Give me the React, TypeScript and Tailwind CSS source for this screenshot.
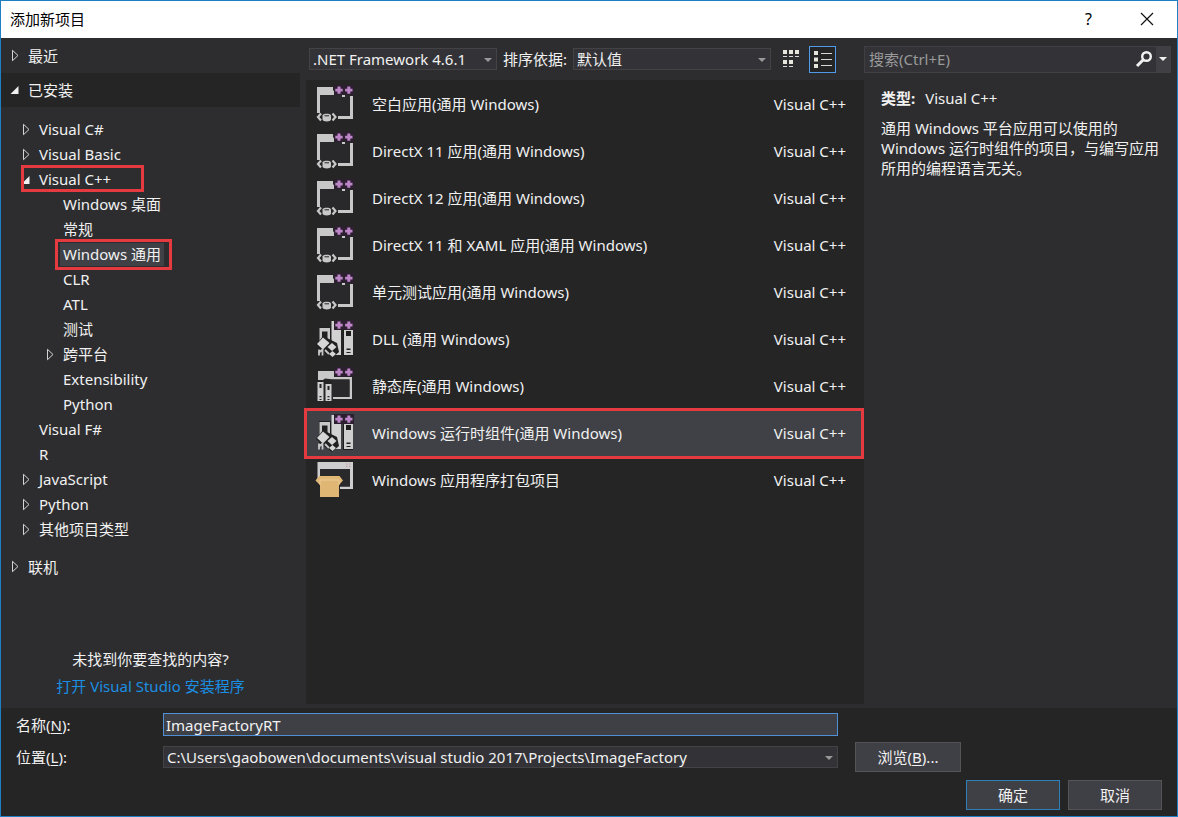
import { useState } from "react";
import type { ReactNode } from "react";

type TreeNode = {
  label: string;
  level: 1 | 2;
  glyph?: "open" | "closed";
  mark?: "branch" | "leaf";
};

type IconKind = "app" | "component" | "library" | "package";

const TREE: TreeNode[] = [
  { label: "Visual C#", level: 1, glyph: "closed" },
  { label: "Visual Basic", level: 1, glyph: "closed" },
  { label: "Visual C++", level: 1, glyph: "open", mark: "branch" },
  { label: "Windows 桌面", level: 2 },
  { label: "常规", level: 2 },
  { label: "Windows 通用", level: 2, mark: "leaf" },
  { label: "CLR", level: 2 },
  { label: "ATL", level: 2 },
  { label: "测试", level: 2 },
  { label: "跨平台", level: 2, glyph: "closed" },
  { label: "Extensibility", level: 2 },
  { label: "Python", level: 2 },
  { label: "Visual F#", level: 1 },
  { label: "R", level: 1 },
  { label: "JavaScript", level: 1, glyph: "closed" },
  { label: "Python", level: 1, glyph: "closed" },
  { label: "其他项目类型", level: 1, glyph: "closed" },
];

const TEMPLATES: { name: string; icon: IconKind }[] = [
  { name: "空白应用(通用 Windows)", icon: "app" },
  { name: "DirectX 11 应用(通用 Windows)", icon: "app" },
  { name: "DirectX 12 应用(通用 Windows)", icon: "app" },
  { name: "DirectX 11 和 XAML 应用(通用 Windows)", icon: "app" },
  { name: "单元测试应用(通用 Windows)", icon: "app" },
  { name: "DLL (通用 Windows)", icon: "component" },
  { name: "静态库(通用 Windows)", icon: "library" },
  { name: "Windows 运行时组件(通用 Windows)", icon: "component" },
  { name: "Windows 应用程序打包项目", icon: "package" },
];

function Glyph({ kind }: { kind?: "open" | "closed" }) {
  return (
    <span className="flex w-[18px] shrink-0">
      {kind === "closed" && (
        <svg width="10" height="14" viewBox="0 0 10 14" fill="none" aria-hidden="true">
          <path d="M2.5 1.3 L8 6.5 L2.5 11.7 Z" stroke="#d4d4d4" strokeWidth="1" />
        </svg>
      )}
      {kind === "open" && (
        <svg width="10" height="12" viewBox="0 0 10 12" aria-hidden="true">
          <path d="M8.5 2 V10 H0.5 Z" fill="#f1f1f1" />
        </svg>
      )}
    </span>
  );
}

function Pluses() {
  return (
    <g>
      <path d="M19 1 H39 V11 H19 Z" fill="#2c1f30" />
      <path
        d="M22.5 2.5h3v2.2h2.2v2.9h-2.2v2.2h-3v-2.2h-2.2v-2.9h2.2z M32.3 2.5h3v2.2h2.2v2.9h-2.2v2.2h-3v-2.2h-2.2v-2.9h2.2z"
        fill="#bd86c8"
      />
    </g>
  );
}

function TemplateIcon({ kind }: { kind: IconKind }) {
  return (
    <svg width="40" height="40" viewBox="0 0 40 40" className="shrink-0" aria-hidden="true">
      {kind === "app" && (
        <g>
          <path d="M2 3 H18 V6 L19.5 8 L20.5 11 H5 V29 H2 Z" fill="#c8c8c8" />
          <path d="M5 11 H35 V32 H5 Z" fill="#29292b" />
          <path d="M35 12 H38 V35 H23 V32 H35 Z" fill="#c8c8c8" />
          <path d="M27 11 H30 V13 H27 Z" fill="#c8c8c8" />
          <path d="M6 29.5 L3 33 L6 36.5 M17.5 29.5 L20.5 33 L17.5 36.5" stroke="#c8c8c8" strokeWidth="2.2" fill="none" />
          <path d="M7.5 31.5 C7.5 29 16 29 16 31.5 V35.5 C16 38 7.5 38 7.5 35.5 Z" fill="#c8c8c8" />
          <path d="M9.5 31.8 H14" stroke="#252526" strokeWidth="1" />
          <Pluses />
        </g>
      )}
      {kind === "component" && (
        <g>
          <path d="M4 8 H16 V31 H4 Z" fill="#202021" />
          <path d="M4.5 9 H15 V24 H4.5 Z M7 12.5 V20 H12.5 V12.5 Z" fill="#c8c8c8" fillRule="evenodd" />
          <path d="M16.5 2 H19 V8 H21 V11 H26 V36 H16.5 Z" fill="#d2d2d2" />
          <path d="M28 10 H38 V37 H28 Z" fill="#1e1e1f" />
          <path d="M29 11 H38 V36 H29 Z M31 12 V17 H36 V12 Z M31.5 29.5 V31 H35.5 V29.5 Z M31.5 33 V34 H35.5 V33 Z" fill="#cfcfcf" fillRule="evenodd" />
          <path d="M8 17 L22 24 L24 33 L17 39 L8 32 L1 26 Z" fill="#202021" />
          <path d="M8 18.5 L14.5 24 L8 30.5 L2 25 Z M17 24 L21.5 28 L17 32 L12.5 28 Z M17.5 32 L21 35 L17.5 38 L14 35 Z" fill="#d6d6d6" />
          <path d="M4 30.5 V36.5 M4 33.5 L7.5 30.5 V36.5 M10 31 L14 35" stroke="#c8c8c8" strokeWidth="1.8" fill="none" />
          <Pluses />
        </g>
      )}
      {kind === "library" && (
        <g>
          <path d="M3 5 H19 V11 H37 V33 H18 V31 H34.5 V13.5 H19 L10 12.5 L8 14 H3 Z" fill="#c8c8c8" />
          <path d="M17 13.5 H34.5 V31 H17 Z" fill="#29292b" />
          <path d="M2.5 16 H8.5 V35 H2.5 Z M4.5 18 V22 H6.5 V18 Z M4.5 30 V31.2 H6.5 V30 Z M4.5 33 V34 H6.5 V33 Z" fill="#cfcfcf" fillRule="evenodd" />
          <path d="M10.5 18 H16.5 V35 H10.5 Z M12.5 20 V24 H14.5 V20 Z M12.5 30 V31.2 H14.5 V30 Z M12.5 33 V34 H14.5 V33 Z" fill="#cfcfcf" fillRule="evenodd" />
          <Pluses />
        </g>
      )}
      {kind === "package" && (
        <g>
          <path d="M2.5 2 H38 V29 H25 V26.5 H35 V9 H5 V21 H2.5 Z" fill="#cecece" />
          <path d="M5 9 H35 V26.5 H5 Z" fill="#29292b" />
          <path d="M31 4 h1.5 M34 4 h1.5 M31 6.5 h1.5 M34 6.5 h1.5" stroke="#c79a9a" strokeWidth="1" />
          <path d="M4 16 H24.5 L28 20.5 L24 25 V37 H5 V25 L0.5 20.5 Z" fill="#e0b674" />
          <path d="M5 25 V20 H24 V25" stroke="#eccb96" strokeWidth="1" fill="none" />
        </g>
      )}
    </svg>
  );
}

function Dropdown({ id, label, value, className }: { id: string; label: string; value: string; className: string }) {
  return (
    <span className={`relative flex ${className}`}>
      <select
        id={id}
        aria-label={label}
        className="h-[22px] w-full appearance-none border border-[#434346] bg-[#333337] pr-6 pl-[3px] leading-5 text-[#f1f1f1] outline-none"
      >
        <option>{value}</option>
      </select>
      <svg width="8" height="4" viewBox="0 0 8 4" className="pointer-events-none absolute top-[10px] right-[5px]" aria-hidden="true">
        <path d="M0 0 H8 L4 4 Z" fill="#999999" />
      </svg>
    </span>
  );
}

function SectionRow({ glyph, children, active }: { glyph: "open" | "closed"; children: ReactNode; active?: boolean }) {
  return (
    <button
      type="button"
      className={`flex w-full items-center pl-[9px] text-left ${active ? "h-[34px] bg-[#252526]" : "h-[35px]"}`}
    >
      <Glyph kind={glyph} />
      {children}
    </button>
  );
}

export default function App() {
  const [category, setCategory] = useState(5);
  const [template, setTemplate] = useState(7);
  const [name, setName] = useState("ImageFactoryRT");

  return (
    <div className="flex min-h-screen flex-col border border-[#1f7fc4] bg-[#2d2d2f] font-['Noto_Sans','Noto_Sans_CJK_SC',sans-serif] text-[15px] leading-5 text-[#f1f1f1]">
      <header className="flex h-[37px] items-center justify-between bg-white pb-px pl-[9px] text-black">
        <h1>添加新项目</h1>
        <div className="flex h-full">
          <button type="button" aria-label="帮助" className="w-[57px] text-base">
            ?
          </button>
          <button type="button" aria-label="关闭" className="flex w-[60px] items-center justify-center">
            <svg width="14" height="14" viewBox="0 0 14 14" aria-hidden="true">
              <path d="M1 1 L13 13 M13 1 L1 13" stroke="#111111" strokeWidth="1.2" />
            </svg>
          </button>
        </div>
      </header>

      <main className="flex grow">
        <nav className="mr-[6px] flex w-[299px] shrink-0 flex-col">
          <SectionRow glyph="closed">最近</SectionRow>
          <SectionRow glyph="open" active>
            已安装
          </SectionRow>
          <ul className="mt-[10px] mb-[7px]">
            {TREE.map((node, i) => (
              <li key={i} className="relative">
                <button
                  type="button"
                  onClick={() => setCategory(i)}
                  className={`flex h-[25px] w-full items-center text-left ${node.level === 1 ? "pl-5" : "pl-11"}`}
                >
                  <Glyph kind={node.glyph} />
                  <span className={category === i ? "-mx-[3px] bg-[#3f4146] px-[3px] leading-[23px]" : "leading-[23px]"}>
                    {node.label}
                  </span>
                </button>
                {node.mark === "branch" && (
                  <span className="pointer-events-none absolute -top-[2px] left-5 h-[27px] w-[123px] border-3 border-[#e53a40]" />
                )}
                {node.mark === "leaf" && (
                  <span className="pointer-events-none absolute -top-[3px] left-[54px] h-[31px] w-[117px] border-3 border-[#e53a40]" />
                )}
              </li>
            ))}
          </ul>
          <SectionRow glyph="closed">联机</SectionRow>
          <div className="mt-auto flex flex-col items-center gap-[7px] pt-6 pb-3">
            <p>未找到你要查找的内容?</p>
            <a href="#installer" className="text-[#1a8fe3]">
              打开 Visual Studio 安装程序
            </a>
          </div>
        </nav>

        <section className="flex min-w-0 grow flex-col pb-1">
          <div className="flex h-[42px] items-center pl-[3px]">
            <Dropdown id="framework" label="目标框架" value=".NET Framework 4.6.1" className="w-[188px]" />
            <label htmlFor="sort" className="mx-[6px] whitespace-nowrap">
              排序依据:
            </label>
            <Dropdown id="sort" label="排序依据" value="默认值" className="w-[198px]" />
            <button type="button" aria-label="小图标" className="ml-2 flex h-[27px] w-[24px] items-center justify-center">
              <svg width="18" height="20" viewBox="0 0 18 20" aria-hidden="true">
                <path d="M1 1h4v4H1z M7 1h4v4H7z M13 1h4v4h-4z M1 11h4v4H1z M7 11h4v4H7z" fill="#e6e6dc" />
                <path d="M1 7.5h4 M7 7.5h4 M13 7.5h4 M1 17.5h4 M7 17.5h4" stroke="#d8d8d8" strokeWidth="1" />
              </svg>
            </button>
            <button
              type="button"
              aria-label="列表"
              className="ml-[6px] flex h-[27px] w-[27px] items-center justify-center border border-[#4f9bea] bg-[#252526]"
            >
              <svg width="19" height="19" viewBox="0 0 19 19" aria-hidden="true">
                <path d="M1 1h4v4H1z M1 7.5h4v4H1z M1 14h4v4H1z" fill="#e6e6dc" />
                <path d="M8 3.5h11 M8 9.5h11 M8 15.5h11" stroke="#d8d8d8" strokeWidth="1" />
              </svg>
            </button>
          </div>
          <ul className="grow bg-[#252526]">
            {TEMPLATES.map((item, i) => (
              <li key={item.name} className="relative">
                <button
                  type="button"
                  onClick={() => setTemplate(i)}
                  className={`flex h-[47px] w-full items-center pr-[18px] pl-[9px] text-left ${template === i ? "bg-[#3f4146]" : ""}`}
                >
                  <TemplateIcon kind={item.icon} />
                  <span className="ml-[17px] grow">{item.name}</span>
                  <span>Visual C++</span>
                </button>
                {i === 7 && (
                  <span className="pointer-events-none absolute -top-px right-0 -bottom-[3px] -left-[2px] z-10 border-3 border-[#e53a40]" />
                )}
              </li>
            ))}
          </ul>
        </section>

        <aside className="w-[313px] shrink-0">
          <div className="flex h-[42px] items-center pr-[6px]">
            <div className="flex h-[27px] grow border border-[#3f3f44] bg-[#333337]">
              <input
                type="search"
                aria-label="搜索"
                placeholder="搜索(Ctrl+E)"
                className="min-w-0 grow bg-transparent px-1 outline-none placeholder:text-[#999999]"
              />
              <button type="button" aria-label="开始搜索" className="flex w-5 items-center justify-center">
                <svg width="18" height="18" viewBox="0 0 18 18" fill="none" aria-hidden="true">
                  <circle cx="11.5" cy="6.5" r="4.3" stroke="#f1f1f1" strokeWidth="2.4" />
                  <path d="M8.3 9.7 L2 16" stroke="#f1f1f1" strokeWidth="3" />
                </svg>
              </button>
              <button type="button" aria-label="搜索选项" className="ml-[2px] flex w-[14px] items-center justify-center bg-[#3f3f44]">
                <svg width="8" height="4" viewBox="0 0 8 4" aria-hidden="true">
                  <path d="M0 0 H8 L4 4 Z" fill="#f1f1f1" />
                </svg>
              </button>
            </div>
          </div>
          <div className="pt-2 pr-[10px] pl-[17px]">
            <p>
              <strong className="mr-[10px]">类型:</strong>
              Visual C++
            </p>
            <p className="mt-[10px]">通用 Windows 平台应用可以使用的 Windows 运行时组件的项目，与编写应用所用的编程语言无关。</p>
          </div>
        </aside>
      </main>

      <footer className="bg-[#252526] pt-[5px] pb-[6px]">
        <div className="grid grid-cols-[130px_1fr_106px] items-center gap-x-[17px] pr-[216px] pl-[15px]">
          <label htmlFor="name">
            名称(<u className="underline-offset-2">N</u>):
          </label>
          <input
            id="name"
            value={name}
            onChange={(e) => setName(e.target.value)}
            className="h-[23px] w-full border border-[#4f8fd6] bg-[#3f3f46] px-[2px] leading-5 outline-none"
          />
          <span />
          <label htmlFor="location">
            位置(<u className="underline-offset-2">L</u>):
          </label>
          <Dropdown
            id="location"
            label="位置"
            value="C:\Users\gaobowen\documents\visual studio 2017\Projects\ImageFactory"
            className="w-full"
          />
          <button type="button" className="my-[6px] h-[30px] border border-[#555558] bg-[#3f3f46]">
            浏览(<u className="underline-offset-2">B</u>)...
          </button>
        </div>
        <div className="mt-[2px] flex justify-end gap-2 pr-[15px]">
          <button type="button" className="h-[30px] w-[94px] border border-[#2f7fb8] bg-[#3f3f46]">
            确定
          </button>
          <button type="button" className="h-[30px] w-[94px] border border-[#555558] bg-[#3f3f46]">
            取消
          </button>
        </div>
      </footer>
    </div>
  );
}
